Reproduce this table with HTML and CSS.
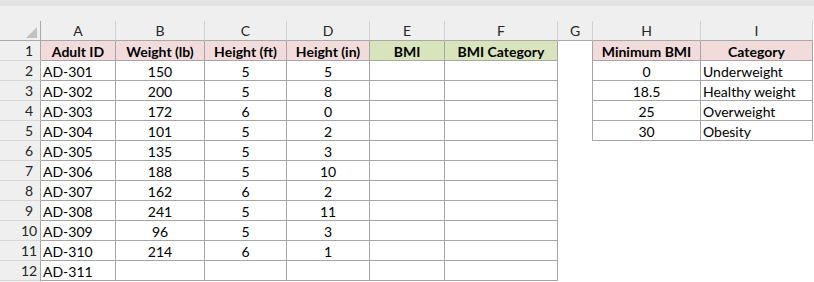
FILE: index.html
```html
<!DOCTYPE html>
<html>
<head>
<meta charset="utf-8">
<link rel="stylesheet" href="styles.css">
</head>
<body>
<div class="band"></div>
<div class="sheet">
  <div class="corner"><span class="tri"></span></div>
  <div class="ch">A</div><div class="ch">B</div><div class="ch">C</div><div class="ch">D</div><div class="ch">E</div><div class="ch">F</div><div class="ch">G</div><div class="ch">H</div><div class="ch">I</div>

  <div class="rh">1</div>
  <div class="c bd pink b ctr">Adult ID</div><div class="c bd pink b ctr">Weight (lb)</div><div class="c bd pink b ctr">Height (ft)</div><div class="c bd pink b ctr">Height (in)</div><div class="c bd green b ctr">BMI</div><div class="c bd green b ctr">BMI Category</div><div class="c gap"></div><div class="c bd pink b ctr">Minimum BMI</div><div class="c bd pink b ctr">Category</div>

  <div class="rh">2</div>
  <div class="c bd">AD-301</div><div class="c bd ctr">150</div><div class="c bd ctr">5</div><div class="c bd ctr">5</div><div class="c bd"></div><div class="c bd"></div><div class="c gap"></div><div class="c bd ctr">0</div><div class="c bd">Underweight</div>

  <div class="rh">3</div>
  <div class="c bd">AD-302</div><div class="c bd ctr">200</div><div class="c bd ctr">5</div><div class="c bd ctr">8</div><div class="c bd"></div><div class="c bd"></div><div class="c gap"></div><div class="c bd ctr">18.5</div><div class="c bd">Healthy weight</div>

  <div class="rh">4</div>
  <div class="c bd">AD-303</div><div class="c bd ctr">172</div><div class="c bd ctr">6</div><div class="c bd ctr">0</div><div class="c bd"></div><div class="c bd"></div><div class="c gap"></div><div class="c bd ctr">25</div><div class="c bd">Overweight</div>

  <div class="rh">5</div>
  <div class="c bd">AD-304</div><div class="c bd ctr">101</div><div class="c bd ctr">5</div><div class="c bd ctr">2</div><div class="c bd"></div><div class="c bd"></div><div class="c gap"></div><div class="c bd ctr">30</div><div class="c bd">Obesity</div>

  <div class="rh">6</div>
  <div class="c bd">AD-305</div><div class="c bd ctr">135</div><div class="c bd ctr">5</div><div class="c bd ctr">3</div><div class="c bd"></div><div class="c bd"></div><div class="c"></div><div class="c"></div><div class="c"></div>

  <div class="rh">7</div>
  <div class="c bd">AD-306</div><div class="c bd ctr">188</div><div class="c bd ctr">5</div><div class="c bd ctr">10</div><div class="c bd"></div><div class="c bd"></div><div class="c"></div><div class="c"></div><div class="c"></div>

  <div class="rh">8</div>
  <div class="c bd">AD-307</div><div class="c bd ctr">162</div><div class="c bd ctr">6</div><div class="c bd ctr">2</div><div class="c bd"></div><div class="c bd"></div><div class="c"></div><div class="c"></div><div class="c"></div>

  <div class="rh">9</div>
  <div class="c bd">AD-308</div><div class="c bd ctr">241</div><div class="c bd ctr">5</div><div class="c bd ctr">11</div><div class="c bd"></div><div class="c bd"></div><div class="c"></div><div class="c"></div><div class="c"></div>

  <div class="rh">10</div>
  <div class="c bd">AD-309</div><div class="c bd ctr">96</div><div class="c bd ctr">5</div><div class="c bd ctr">3</div><div class="c bd"></div><div class="c bd"></div><div class="c"></div><div class="c"></div><div class="c"></div>

  <div class="rh">11</div>
  <div class="c bd">AD-310</div><div class="c bd ctr">214</div><div class="c bd ctr">6</div><div class="c bd ctr">1</div><div class="c bd"></div><div class="c bd"></div><div class="c"></div><div class="c"></div><div class="c"></div>

  <div class="rh">12</div>
  <div class="c bd">AD-311</div><div class="c bd"></div><div class="c bd"></div><div class="c bd"></div><div class="c bd"></div><div class="c bd"></div><div class="c"></div><div class="c"></div><div class="c"></div>

  <div class="rh rh-last"></div>
</div>
</body>
</html>
```

FILE: styles.css
```css
* { box-sizing: border-box; }
html, body {
  margin: 0;
  padding: 0;
  background: #ffffff;
}
body {
  width: 814px;
  height: 282px;
  overflow: hidden;
  font-family: Lato, "Liberation Sans", sans-serif;
  font-size: 14px;
  color: #000000;
}
.band {
  height: 21px;
  background: #efefef;
  border-top: 6px solid #e3e3e3;
}
.sheet {
  display: grid;
  grid-template-columns: 41px 75px 89px 82px 83px 75px 113px 35px 108px 112px;
  grid-template-rows: repeat(13, 20px) 1px;
}
.corner {
  background: #efefef;
  border-right: 1px solid #a8a8a8;
  border-bottom: 1px solid #a8a8a8;
  display: flex;
  justify-content: flex-end;
  align-items: flex-end;
  padding: 0 3px 2px 0;
}
.tri {
  width: 0;
  height: 0;
  border-left: 11px solid transparent;
  border-bottom: 11px solid #c2c2c2;
}
.ch {
  background: #efefef;
  border-right: 1px solid #d2d2d2;
  border-bottom: 1px solid #a8a8a8;
  text-align: center;
  line-height: 19px;
  color: #262626;
}
.rh {
  background: #efefef;
  border-right: 1px solid #a8a8a8;
  border-bottom: 1px solid #d6d6d6;
  padding-left: 18px;
  text-align: center;
  line-height: 19px;
  color: #262626;
}
.rh-last {
  border-bottom: none;
}
.c {
  line-height: 19px;
  padding: 1px 2px 0;
  white-space: nowrap;
  overflow: hidden;
}
.bd {
  border-right: 1px solid #a6a6a6;
  border-bottom: 1px solid #a6a6a6;
}
.gap {
  border-right: 1px solid #a6a6a6;
}
.ctr { text-align: center; }
.b { font-weight: 700; }
.pink { background: #f2dcdb; }
.green { background: #d8e4bc; }
```
